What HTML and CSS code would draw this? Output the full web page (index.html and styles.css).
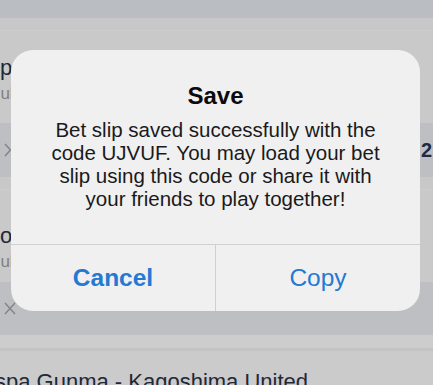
FILE: index.html
```html
<!DOCTYPE html>
<html lang="en">
<head>
    <meta charset="UTF-8">
    <meta name="viewport" content="width=device-width, initial-scale=1.0">
    <title>Save bet slip</title>
    <link rel="stylesheet" href="styles.css">
</head>
<body>

<div class="page">
    <div class="topbar"></div>
    <div class="gap"></div>

    <div class="card card-first">
        <div class="match">Thespa Gunma - Kagoshima United</div>
        <div class="status">Full time</div>
    </div>
    <div class="bar">
        <svg class="chevron" width="8" height="14" viewBox="0 0 8 14">
            <polyline points="1,1 6.5,7 1,13" fill="none" stroke="#7f8289" stroke-width="1.4"/>
        </svg>
        <span class="odds">2.15</span>
    </div>
    <div class="gap"></div>

    <div class="card card-second">
        <div class="match indent-ro">Roasso Kumamoto - Iwaki FC</div>
        <div class="status">Full time</div>
    </div>
    <div class="bar bar-close">
        <svg class="close" width="12" height="13" viewBox="0 0 12 13">
            <path d="M1 1 L11 12 M11 1 L1 12" fill="none" stroke="#7f8289" stroke-width="1.3"/>
        </svg>
    </div>
    <div class="gap gap-last"></div>

    <div class="card card-third">
        <div class="match indent-spa">spa Gunma - Kagoshima United</div>
    </div>
</div>

<div class="alert">
    <h2 class="alert-title">Save</h2>
    <p class="alert-text">Bet slip saved successfully with the code UJVUF. You may load your bet slip using this code or share it with your friends to play together!</p>
    <div class="alert-actions">
        <button class="alert-btn cancel">Cancel</button>
        <button class="alert-btn copy">Copy</button>
    </div>
</div>

</body>
</html>
```

FILE: styles.css
```css
body {
    font-family: "Liberation Sans", Arial, sans-serif;
    margin: 0;
    width: 433px;
    height: 385px;
    overflow: hidden;
    background: #c9c9c9;
}
.page {
    display: flex;
    flex-direction: column;
}
.topbar {
    height: 18px;
    background: #babdc2;
}
.gap {
    height: 12px;
    background: #c8c8c8;
    border-bottom: 1px solid #cdcdcd;
}
.gap-last {
    height: 13px;
    background: #cdcdcd;
    border-bottom: 3px solid #c3c4c6;
}
.card {
    height: 92px;
    background: #c9c9c9;
    box-sizing: border-box;
}
.card-first {
    padding-top: 24px;
}
.card-second {
    padding-top: 33px;
}
.card-third {
    height: 40px;
    padding-top: 18px;
    background: #cbcbcb;
}
.match {
    font-size: 22px;
    color: #1f2837;
    white-space: nowrap;
    margin-left: -49px;
}
.indent-ro {
    margin-left: -16px;
}
.indent-spa {
    margin-left: -5px;
}
.status {
    font-size: 17px;
    color: #7e8187;
    white-space: nowrap;
    margin-top: 3px;
    margin-left: -10px;
}
.bar {
    height: 54px;
    background: #bdbfc3;
    display: flex;
    align-items: center;
}
.bar-close {
    height: 53px;
}
.chevron {
    margin-left: 4px;
    margin-top: 0;
}
.close {
    margin-left: 4px;
}
.odds {
    margin-left: auto;
    width: 12px;
    overflow: hidden;
    white-space: nowrap;
    font-size: 20px;
    font-weight: bold;
    color: #1d2a44;
}

/* dialog over the page */
.alert {
    position: absolute;
    top: 50px;
    left: 11px;
    width: 409px;
    background: #f0f0f1;
    border-radius: 22px;
    overflow: hidden;
    text-align: center;
}
.alert-title {
    margin: 32px 0 0;
    font-size: 24px;
    line-height: 28px;
    font-weight: bold;
    color: #0b0b0b;
}
.alert-text {
    margin: 8px 0 0;
    padding: 0 32px 34px;
    font-size: 20.5px;
    line-height: 23px;
    color: #1a1a1a;
}
.alert-actions {
    display: flex;
    border-top: 1px solid #d0d0d3;
}
.alert-btn {
    flex: 1;
    height: 66px;
    border: none;
    background: none;
    font-family: "Liberation Sans", Arial, sans-serif;
    font-size: 24.5px;
    color: #2479d2;
    padding: 0;
}
.cancel {
    font-weight: bold;
    border-right: 1px solid #d0d0d3;
}
```
